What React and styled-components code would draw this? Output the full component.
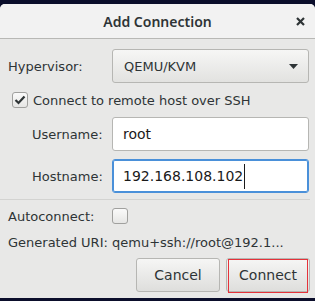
import React from "react";
import styled, { createGlobalStyle } from "styled-components";

const Global = createGlobalStyle`
  html, body { margin: 0; padding: 0; background: #0b0e2b; }
  body { font-family: "DejaVu Sans", sans-serif; width: 315px; height: 301px; overflow: hidden; }
`;

const Window = styled.div`
  margin-top: 4px;
  width: 315px;
  height: 294px;
  background: #e8e8e7;
  border-radius: 5px 5px 0 0;
  overflow: hidden;
  display: flex;
  flex-direction: column;
  color: #2e3436;
  font-size: 13px;
`;

const TitleBar = styled.div`
  position: relative;
  height: 34px;
  flex: none;
  background: #f2f2f2;
  border-bottom: 1px solid #b8b8b5;
  display: flex;
  align-items: center;
  justify-content: center;
`;

const Title = styled.div`
  font-family: "Noto Sans", "DejaVu Sans", sans-serif;
  font-weight: 600;
  font-size: 14px;
  color: #2e3436;
  margin-top: 1px;
`;

const Close = styled.div`
  position: absolute;
  right: 10px;
  top: 13px;
  width: 9px;
  height: 9px;
  display: flex;
`;

const Section = styled.div`
  display: flex;
  flex-direction: column;
  padding: ${(p) => p.$pad};
`;

const Row = styled.div`
  display: flex;
  align-items: center;
  height: ${(p) => p.$h}px;
  margin-top: ${(p) => p.$mt || 0}px;
  padding-left: ${(p) => p.$indent || 0}px;
`;

const Label = styled.div`
  width: ${(p) => p.$w}px;
  flex: none;
  white-space: nowrap;
`;

const Combo = styled.div`
  width: 197px;
  height: 34px;
  box-sizing: border-box;
  border: 1px solid #b6b6b3;
  border-radius: 3px;
  background: linear-gradient(#f6f6f5, #e2e2e0);
  display: flex;
  align-items: center;
  justify-content: space-between;
  padding: 0 10px 0 11px;
`;

const Entry = styled.div`
  width: 197px;
  height: 34px;
  box-sizing: border-box;
  border: 1px solid ${(p) => (p.$focus ? "#4a90d9" : "#b6b6b3")};
  box-shadow: ${(p) => (p.$focus ? "inset 0 0 0 1px #4a90d9" : "none")};
  border-radius: 3px;
  background: #ffffff;
  display: flex;
  align-items: center;
  padding-left: 10px;
  font-size: 14px;
  color: #1a1a1a;
`;

const Caret = styled.span`
  display: inline-block;
  width: 1px;
  height: 25px;
  background: #1a1a1a;
  margin-left: 1px;
`;

const Check = styled.div`
  width: 16px;
  height: 16px;
  box-sizing: border-box;
  border: 1px solid #a0a09e;
  border-radius: 3px;
  background: linear-gradient(#fafafa, #e6e6e5);
  display: flex;
  align-items: center;
  justify-content: center;
  flex: none;
  margin-right: ${(p) => p.$mr || 0}px;
`;

const Separator = styled.div`
  height: 1px;
  background: #d3d3d1;
  margin-top: 6px;
  margin-right: 5px;
`;

const Value = styled.div`
  white-space: nowrap;
  overflow: hidden;
`;

const ButtonRow = styled.div`
  display: flex;
  justify-content: flex-end;
  gap: 6px;
  margin-top: 6px;
`;

const Button = styled.div`
  position: relative;
  width: 84px;
  height: 34px;
  box-sizing: border-box;
  border: 1px solid #b6b6b3;
  border-radius: 3px;
  background: linear-gradient(#f6f6f5, #dededc);
  display: flex;
  align-items: center;
  justify-content: center;
  font-size: 14px;
`;

const Highlight = styled.div`
  position: absolute;
  left: 1px;
  right: 1px;
  top: 0px;
  bottom: -2px;
  border: 1px solid #e5323a;
`;

export default function App() {
  return (
    <>
      <Global />
      <Window>
        <TitleBar>
          <Title>Add Connection</Title>
          <Close>
            <svg width="9" height="9" viewBox="0 0 9 9">
              <path d="M1 1 L8 8 M8 1 L1 8" stroke="#2e3436" strokeWidth="2.2" />
            </svg>
          </Close>
        </TitleBar>
        <Section $pad="10px 6px 0 8px">
          <Row $h={34}>
            <Label $w={104}>Hypervisor:</Label>
            <Combo>
              <span>QEMU/KVM</span>
              <svg width="9" height="5" viewBox="0 0 9 5">
                <path d="M0 0 L9 0 L4.5 5 Z" fill="#2e3436" />
              </svg>
            </Combo>
          </Row>
          <Row $h={20} $mt={7} $indent={4}>
            <Check $mr={5}>
              <svg width="12" height="10" viewBox="0 0 12 10">
                <path d="M1.5 5 L4.5 8 L10.5 1.5" stroke="#2e3436" strokeWidth="2.2" fill="none" />
              </svg>
            </Check>
            <span>Connect to remote host over SSH</span>
          </Row>
          <Row $h={34} $mt={7} $indent={24}>
            <Label $w={80}>Username:</Label>
            <Entry>root</Entry>
          </Row>
          <Row $h={34} $mt={8} $indent={24}>
            <Label $w={80}>Hostname:</Label>
            <Entry $focus>
              192.168.108.102
              <Caret />
            </Entry>
          </Row>
        </Section>
        <Separator />
        <Section $pad="4px 5px 0 8px">
          <Row $h={24}>
            <Label $w={104}>Autoconnect:</Label>
            <Check />
          </Row>
          <Row $h={20} $mt={4}>
            <Label $w={104}>Generated URI:</Label>
            <Value>qemu+ssh://root@192.1...</Value>
          </Row>
          <ButtonRow>
            <Button>Cancel</Button>
            <Button>
              Connect
              <Highlight />
            </Button>
          </ButtonRow>
        </Section>
      </Window>
    </>
  );
}
